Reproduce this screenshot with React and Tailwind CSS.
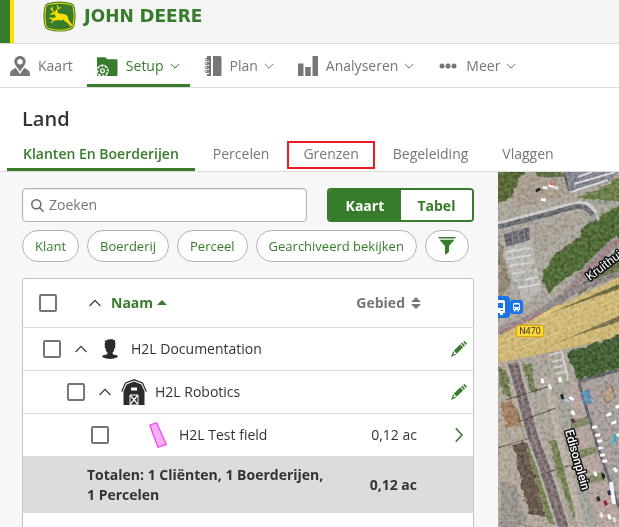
import { useState } from 'react';

const ChevronDown = () => (
  <svg className="w-2.5 h-2" viewBox="0 0 10 8" fill="none" stroke="currentColor" strokeWidth="1">
    <path d="M.8 2 5 6.2 9.2 2" />
  </svg>
);

const ChevronUp = () => (
  <svg className="w-3 h-2" viewBox="0 0 12 8" fill="none" stroke="currentColor" strokeWidth="1.1">
    <path d="M.6 7 6 1.4 11.4 7" />
  </svg>
);

const MapPersonIcon = () => (
  <svg className="size-5" viewBox="0 0 20 20" fill="currentColor">
    <path
      fillRule="evenodd"
      d="M10 0C6.600 0 4.300 2.500 4.300 5.500 4.300 9 8 12 10 15.500 12 12 15.700 9 15.700 5.500 15.700 2.500 13.400 0 10 0Zm0 3a2.700 2.700 0 1 1 0 5.400A2.700 2.700 0 0 1 10 3Z"
    />
    <path d="M5.500 11.800 1.800 14.200C.5 15 0 17 0 20H20C20 17 19.500 15 18.200 14.200L14.500 11.800C13 13.800 11.500 15.500 10 18.200 8.500 15.500 7 13.800 5.500 11.800Z" />
  </svg>
);

const FolderGearIcon = () => (
  <svg className="w-[21px] h-5" viewBox="0 0 21 20">
    <path d="M0 2Q0 1.300.8 1.300H8.200L10.500 3.200H19.500Q20.500 3.200 20.500 4.200V19Q20.500 20 19.500 20H0Z" fill="currentColor" />
    <circle cx="5.500" cy="14.800" r="6.200" fill="#fff" />
    <circle cx="5.500" cy="14.800" r="3.300" fill="none" stroke="currentColor" strokeWidth="1.500" />
    <circle cx="5.500" cy="14.800" r="4.600" fill="none" stroke="currentColor" strokeWidth="1.700" strokeDasharray="1.800 1.813" />
    <circle cx="5.500" cy="14.800" r="1.200" fill="currentColor" />
  </svg>
);

const NotebookIcon = () => (
  <svg className="w-[18px] h-5" viewBox="0 0 18 20" fill="currentColor">
    <path d="M9 0H16Q17.500 0 17.500 1.500V18.500Q17.500 20 16 20H9Z" />
    <path d="M3 0H7V20H3V18H5V16.500H3V14H5V12.500H3V10H5V8.500H3V6H5V4.500H3Z" />
    <path d="M4.500 2.500Q1 1.500 1 3.500T4.500 4.300M4.500 6.500Q1 5.500 1 7.500T4.500 8.300M4.500 10.500Q1 9.500 1 11.500T4.500 12.300M4.500 14.500Q1 13.500 1 15.500T4.500 16.300" fill="none" stroke="currentColor" />
  </svg>
);

const BarsIcon = () => (
  <svg className="size-5" viewBox="0 0 20 20" fill="currentColor">
    <path d="M0 7.500H5.500V20H0ZM7.200 11H12.700V20H7.200ZM14.500 0H20V20H14.500Z" />
  </svg>
);

const DotsIcon = () => (
  <svg className="w-5 h-5" viewBox="0 0 20 20" fill="currentColor">
    <circle cx="4" cy="10" r="2.500" />
    <circle cx="10" cy="10" r="2.500" />
    <circle cx="16" cy="10" r="2.500" />
  </svg>
);

const SearchIcon = () => (
  <svg className="size-[13px] shrink-0 text-[#666]" viewBox="0 0 13 13" fill="none" stroke="currentColor" strokeWidth="1.500">
    <circle cx="5.300" cy="5.300" r="4.500" />
    <path d="m8.500 8.500 4 4.200" />
  </svg>
);

const FunnelIcon = () => (
  <svg className="w-[18px] h-[18px]" viewBox="0 0 18 18" fill="currentColor">
    <path d="M.5 0H17.500V1.600H.5ZM1.500 2.800H16.500L11 9V15L7 18V9Z" />
  </svg>
);

const ClientIcon = () => (
  <svg className="w-4 h-5" viewBox="0 0 16 20" fill="#2b2b2b">
    <path d="M3.200 3.500 2.600 1.500 4.800 1.400 6 .3 8 .6 10.200 0 11.500 1.100 13.400 1.500 13 3.200 13.600 5 13 6.500 13.400 8.500 12.300 9.500 12 12 10.700 13.300V15.200L14.800 16.200Q16.200 17.200 15.800 18 12 20 8 20T.2 18Q-.2 17 1.200 16.200L5.300 15.200V13.300L4 12 3.700 9.500 2.600 8.500 3 6.500 2.500 5Z" />
  </svg>
);

const BarnIcon = () => (
  <svg className="w-[26px] h-[26px]" viewBox="0 0 26 26">
    <path d="M2.500 26V11L5.500 5.200 13 2 20.500 5.200 23.500 11V26Z" fill="#2b2b2b" />
    <path d="M.7 12.500 4.600 4 13 .8 21.400 4 25.300 12.500" fill="none" stroke="#2b2b2b" strokeWidth="1.300" />
    <path d="M2.200 12 5.500 5 13 2.100 20.500 5 23.800 12" fill="none" stroke="#fff" strokeWidth=".8" />
    <path d="M10 8.500H16V11.500H10Z" fill="#fff" />
    <path d="M9 16H17V26H9Z" fill="none" stroke="#fff" />
    <path d="m9.500 16.500 7 8.500M16.500 16.500l-7 8.500" stroke="#fff" strokeWidth="1.300" />
  </svg>
);

const FieldIcon = () => (
  <svg className="w-[18px] h-[26px]" viewBox="0 0 18 26">
    <path d="M.7 3.200 7.500.8 17.300 22.500 9 25.200Z" fill="#f9b0f9" stroke="#f33cf3" strokeWidth="1.200" />
  </svg>
);

const PencilIcon = () => (
  <svg className="size-4" viewBox="0 0 16 16" fill="currentColor">
    <path d="m12.200.8.9-.6q.5-.3 1 .2l1.600 1.800q.4.600-.1 1.100l-.8.8ZM11.300 1.600 14 4.800 12.800 6 10 2.600ZM9.300 3.200 12.100 6.600 5.500 12.800 3 9.500Z" />
    <path d="M2.300 10 0 16l5-2.500-.8-.8-2 .9.900-2.300Z" />
  </svg>
);

const ChevronRight = () => (
  <svg className="w-2 h-4 mx-1" viewBox="0 0 8 16" fill="none" stroke="currentColor" strokeWidth="1.600">
    <path d="m.8 1.200 6.200 6.800-6.200 6.800" />
  </svg>
);

const DeerLogo = () => (
  <svg className="w-[33px] h-[31px]" viewBox="0 0 33 31">
    <path d="M5 2Q16.500-1 28 2 31 3 31.600 6 33.500 15.500 31.600 24 31 27.500 28 28.700 16.500 32.500 5 28.700 2 27.500 1.400 24-.5 15.500 1.400 6 2 3 5 2Z" fill="#367c2b" />
    <path d="M5.700 3.300Q16.500.7 27.300 3.300 29.800 4 30.300 6.500 32 15.500 30.300 23.600 29.800 26.500 27.300 27.500 16.500 31 5.700 27.500 3.200 26.500 2.700 23.600 1 15.500 2.700 6.500 3.200 4 5.700 3.300Z" fill="none" stroke="#ffde00" />
    <path d="M7 13 10.500 11.300 14 9.800 15.500 12.500Q20 12.300 23.500 14L25 16 25.500 19 30 24.500 29 25 23.500 20.800 20.500 18.500 18 19.500 15.500 19 11 19.800 8.500 22.200 7.700 21.700 10 18.700 6.500 17.700 6.300 16.600 11 17 13 15.500 11.500 13.300 7.500 14Z" fill="#ffde00" />
    <path d="M11 11.300Q8.500 9.500 9.500 6M12.500 10.300Q16.500 8 14 4M15 7.500 18 6.500M9.200 8.800 7.500 7.500M21 19l4 2.500 3 4" fill="none" stroke="#ffde00" strokeWidth="1.100" />
  </svg>
);

const navItems = [
  { label: 'Kaart', icon: MapPersonIcon, menu: false },
  { label: 'Setup', icon: FolderGearIcon, menu: true, active: true },
  { label: 'Plan', icon: NotebookIcon, menu: true },
  { label: 'Analyseren', icon: BarsIcon, menu: true },
  { label: 'Meer', icon: DotsIcon, menu: true },
];

const tabs = ['Klanten En Boerderijen', 'Percelen', 'Grenzen', 'Begeleiding', 'Vlaggen'];

const chips = ['Klant', 'Boerderij', 'Perceel', 'Gearchiveerd bekijken'];

const rows = [
  { name: 'H2L Documentation', kind: 'client', indent: 'pl-5' },
  { name: 'H2L Robotics', kind: 'farm', indent: 'pl-11' },
  { name: 'H2L Test field', kind: 'field', indent: 'pl-17', area: '0,12 ac' },
];

// x, y, rotation, colour
const cars = [
  [45, 14, 10, '#eee'], [51, 12, 10, '#fff'], [56, 14, 10, '#ddd'], [43, 26, 5, '#fff'], [52, 10, 5, '#c66'],
  [37, 18, -30, '#223'], [45, 206, 70, '#fff'], [52, 212, 60, '#eee'], [65, 222, 75, '#222'], [72, 224, 30, '#fff'],
  [68, 226, 30, '#b5c6dc'], [75, 238, 60, '#fff'], [75, 246, 60, '#533'], [94, 254, -10, '#fff'], [97, 262, -10, '#fff'],
  [99, 268, -10, '#fff'], [100, 275, -10, '#eee'], [102, 282, -10, '#fff'], [104, 288, -10, '#fff'], [108, 242, -20, '#fff'],
  [113, 250, -20, '#fff'], [118, 262, -20, '#fff'], [117, 234, -20, '#fff'], [112, 318, 75, '#263755'], [101, 324, 70, '#222'],
  [108, 328, 70, '#922'], [112, 342, 70, '#fff'], [117, 345, 70, '#ddd'], [104, 340, 70, '#eee'], [106, 301, 70, '#222'],
  [98, 299, 70, '#fff'], [117, 295, 50, '#fff'], [63, 205, 80, '#fff'],
];

const SatelliteMap = () => (
  <svg className="absolute inset-0 w-full h-full" viewBox="0 0 121 355" preserveAspectRatio="xMinYMin slice">
    <defs>
      <filter id="grain" x="0" y="0" width="100%" height="100%" colorInterpolationFilters="sRGB">
        <feTurbulence type="fractalNoise" baseFrequency=".3" numOctaves="4" seed="8" />
        <feColorMatrix values="2.200 0 0 0 -.5  2.200 0 0 0 -.5  2.200 0 0 0 -.5  0 0 0 0 1" />
      </filter>
      <filter id="rough" x="-5%" y="-5%" width="110%" height="110%" colorInterpolationFilters="sRGB">
        <feTurbulence type="fractalNoise" baseFrequency=".15" numOctaves="2" seed="3" />
        <feDisplacementMap in="SourceGraphic" scale="7" xChannelSelector="R" yChannelSelector="G" />
      </filter>
    </defs>
    <rect width="121" height="355" fill="#aaa399" />
    <g filter="url(#rough)">
      <path d="M-4-4H30L22 8 14 24-4 34Z" fill="#566735" />
      <path d="M34-4H62L66 5 40 4Z" fill="#5f6f42" />
      <path d="M28 2 64 6 70 24 20 36 12 28Z" fill="#a89c8e" />
      <path d="M76 26 104 16 125 3V30L90 27Z" fill="#6a7c46" />
      <path d="M34 58 88 42 95 46 72 67 36 88Z" fill="#a8a094" />
      <path d="M0 70 6 74 12 110 2 130Z" fill="#8f8472" />
      <path d="M43 102 56 84 78 68 88 52 125 28V66L92 90 66 108 50 122Z" fill="#4e6834" />
      <path d="M78 116 124 76V98L82 122Z" fill="#626f45" />
    </g>
    <path d="M67 0H121L111 9 73 21Z" fill="#80828b" />
    <path d="M73 20 110 8M76 12 117 0M80 5 94 0" stroke="#d6d7dc" strokeWidth="2" />
    <path d="M71 19 66 0" stroke="#5d5e5d" strokeWidth="2" />
    <path d="M0 54Q48 41 76 34 94 29 98 49" fill="none" stroke="#cdcbca" strokeWidth="8" />
    <path d="M0 55Q48 43 76 35 92 32 97 50" fill="none" stroke="#6c6c73" strokeWidth="5" />
    <path d="M93 30 121 31" stroke="#989b95" strokeWidth="4" />
    <path d="M7 66 32 62 44 118 26 132 5 84Z" fill="#b8b5b1" />
    <path d="m8 80 24-4M9 87l24-4M11 94l25-4M14 102l24-4M17 109l23-4M20 116l22-4" stroke="#d3d1cf" strokeWidth="2" />
    <path d="M6 62 31 55 32 68 8 75Z" fill="#6b676f" />
    <path d="m14 60 1 13M20 58l1 13M26 57l1 12" stroke="#8e8b91" />
    <path d="M12 120Q50 80 66 66T121 31" fill="none" stroke="#a9aaa1" strokeWidth="5" opacity=".75" />
    <path d="M0 160Q55 142 78 112T121 67" fill="none" stroke="#958a8c" strokeWidth="9" />
    <path d="M0 161Q55 141 78 112T121 68" fill="none" stroke="#b07578" strokeWidth="1.500" />
    <path d="M45 138Q72 117 121 102" fill="none" stroke="#8c8685" strokeWidth="6" />
    <path d="M0 164 121 105V165L48 181 0 191Z" fill="#cdb674" />
    <path d="M0 176 121 126M0 184 121 137M8 168 121 119" stroke="#dac88c" />
    <path d="M48 143 121 112V117L80 131Z" fill="#6b6a3e" />
    <path d="M52 174 121 144V150L82 162Z" fill="#776f4a" />
    <path d="m39 145 20-12 6 1-21 13Z" fill="#dec47c" />
    <g filter="url(#rough)">
      <path d="M68 180 125 163V196L80 208Z" fill="#425e34" />
      <path d="M0 192 12 194 58 355H0Z" fill="#b0a699" />
      <path d="M3 231 15 228 25 252 8 258Z" fill="#a07c60" />
      <path d="M0 196 8 198 14 228 5 222Z" fill="#6c774e" />
      <path d="M15 272 28 270 36 302 47 344 31 342 23 312Z" fill="#66574b" />
      <path d="M20 238 26 240 60 355 48 346Z" fill="#778252" />
      <path d="M24 192 34 192 39 222 31 218Z" fill="#6f7e53" />
      <path d="M51 268 60 270 80 334 76 348 59 300Z" fill="#748152" />
      <path d="M3 310 18 314 30 355H2Z" fill="#98938c" />
    </g>
    <path d="m15 191 19 71 12 32 20 63" fill="none" stroke="#b3ada6" strokeWidth="15" />
    <path d="m15 191 19 71 12 32 20 63" fill="none" stroke="#78696b" strokeWidth="10" />
    <path d="m15 191 19 71 12 32 20 63" fill="none" stroke="#958786" strokeWidth="1" />
    <path d="M48 205 60 260 84 355" fill="none" stroke="#b8afa6" strokeWidth="7" />
    <path d="M57 213Q68 226 70 247L93 355" fill="none" stroke="#9fa098" strokeWidth="9" />
    <path d="m68 215 12-6 41 140v6H98Z" fill="#b3a29d" />
    <path d="m72 250 18-6 2 8-18 5ZM79 279l18-5 2 7-18 5ZM87 305l18-5 2 8-18 4Z" fill="#7c865f" />
    <path d="M80 211 121 198V336L103 281Z" fill="#a59d99" />
    <path d="m80 210 41-12M81 211l20 68 20 57" fill="none" stroke="#66656c" strokeWidth="3" />
    <path d="M83 220 91 217 94 230 87 233Z" fill="#5d8fb4" />
    <path d="m103 220 11-6 3 12-8 5ZM106 209l9 6" fill="#b59d86" stroke="#877161" />
    <path d="m113 310 3 22" stroke="#f3f4f5" strokeWidth="4" />
    <path d="m118 263-4 9" stroke="#4aabba" strokeWidth="4" />
    <path d="m8 228 44-14M20 250l38-14M42 303l31-10M0 276l32-10" stroke="#3c3b37" strokeWidth=".7" />
    <path d="M51 183 64 180 70 208M54 190l12-3M56 196l12-3M57 202l13-3" fill="none" stroke="#d0cec9" strokeWidth="2" />
    {cars.map(([x, y, turn, color]) => (
      <rect key={`${x}-${y}`} x={x} y={y} width="5" height="3" fill={color} transform={`rotate(${turn} ${x} ${y})`} />
    ))}
    <rect width="121" height="355" filter="url(#grain)" opacity=".35" className="mix-blend-soft-light" />
    <g>
      <path d="M-8 124H8Q12 124 12 128V142Q12 146 8 146H-8Z" fill="#1a73e8" />
      <path d="M-6 128H5Q7 128 7 130V141H5V143H2V141H-6Z" fill="#fff" />
      <path d="M-6 131H5V136H-6ZM3 138h2v1H3Z" fill="#1a73e8" />
      <rect x="12" y="128" width="13" height="14" rx="3" fill="#1a73e8" />
      <path d="M15 131.500Q18.500 130 22 131.500V138H21V139.500H19.500V138H17.500V139.500H16V138H15Z" fill="#fff" />
      <path d="M16 132.500H21V135H16ZM16 136h1v1H16ZM20 136h1v1H20Z" fill="#1a73e8" />
      <rect x="18.500" y="153.500" width="27" height="11" rx="1" fill="#fdd835" stroke="#e0a800" />
      <text x="32" y="162" textAnchor="middle" className="font-['Roboto'] text-[9px]" fill="#333">N470</text>
    </g>
    <g fill="#fff" stroke="#111" strokeWidth="3" strokeLinejoin="round" paintOrder="stroke">
      <text transform="translate(92 109) rotate(-37)" className="font-['Roboto'] text-xs">Kruithui</text>
      <text transform="translate(67 259) rotate(74)" className="font-['Roboto'] text-xs font-medium">Edisonplein</text>
    </g>
  </svg>
);

const Checkbox = ({ label }) => (
  <input
    type="checkbox"
    aria-label={label}
    className="appearance-none size-[18px] shrink-0 rounded-xs border-2 border-[#767676] bg-white checked:bg-[#367c2b]"
  />
);

const FarmTable = () => (
  <div className="flex-1 rounded-t-sm border border-b-0 border-[#c4c4c4] bg-white">
    <table className="w-full table-fixed text-left text-sm text-[#333]">
      <colgroup>
        <col />
        <col className="w-[91px]" />
        <col className="w-[52px]" />
      </colgroup>
      <thead>
        <tr className="h-12 border-b border-[#dcdcdc]">
          <th className="p-0 pl-4">
            <div className="flex items-center">
              <Checkbox label="Alles selecteren" />
              <button type="button" aria-label="Alles inklappen" className="ml-8">
                <ChevronUp />
              </button>
              <button type="button" className="ml-2.5 flex items-center gap-1 font-bold text-[#367c2b]">
                Naam
                <svg className="w-2.5 h-[5px]" viewBox="0 0 10 5" fill="currentColor">
                  <path d="M0 5 5 0 10 5Z" />
                </svg>
              </button>
            </div>
          </th>
          <th className="p-0">
            <button type="button" className="ml-auto flex items-center gap-1.5 font-bold text-[#767676]">
              Gebied
              <svg className="w-2.5 h-3" viewBox="0 0 10 12" fill="currentColor">
                <path d="M0 5 5 0 10 5ZM0 7H10L5 12Z" />
              </svg>
            </button>
          </th>
          <th className="p-0"></th>
        </tr>
      </thead>
      <tbody>
        {rows.map((row) => (
          <tr key={row.name} className="h-[43px] border-b border-[#dcdcdc] last:border-b-0">
            <td className={`p-0 ${row.indent}`}>
              <div className="flex items-center">
                <Checkbox label={row.name} />
                {row.kind !== 'field' ? (
                  <button type="button" aria-label={`${row.name} inklappen`} className="ml-3.5">
                    <ChevronUp />
                  </button>
                ) : (
                  <span className="ml-3.5 w-3" />
                )}
                <span className="mr-[7px] ml-[9px] flex w-7 justify-center">
                  {row.kind === 'client' && <ClientIcon />}
                  {row.kind === 'farm' && <BarnIcon />}
                  {row.kind === 'field' && <FieldIcon />}
                </span>
                {row.name}
              </div>
            </td>
            <td className="p-0 pr-1 text-right">{row.area}</td>
            <td className="p-0 pr-1.5 text-[#367c2b]">
              <div className="flex justify-end">
                {row.kind === 'field' ? (
                  <button type="button" aria-label={`${row.name} openen`}>
                    <ChevronRight />
                  </button>
                ) : (
                  <button type="button" aria-label={`${row.name} bewerken`}>
                    <PencilIcon />
                  </button>
                )}
              </div>
            </td>
          </tr>
        ))}
      </tbody>
      <tfoot>
        <tr className="h-[57px] bg-[#dcdcdc] font-bold">
          <td className="p-0 pl-16">Totalen: 1 Cliënten, 1 Boerderijen, 1 Percelen</td>
          <td className="p-0 pr-1 text-right">0,12 ac</td>
          <td className="p-0"></td>
        </tr>
      </tfoot>
    </table>
  </div>
);

const App = () => {
  const [search, setSearch] = useState('');
  const [view, setView] = useState('Kaart');

  return (
    <div className="flex min-h-screen flex-col bg-white font-['Open_Sans',sans-serif] text-sm text-[#333]">
      <header className="flex h-11 border-b border-[#dcdcdc] bg-[#f5f5f5]">
        <div className="w-3.5 border-r-4 border-[#ffde00] bg-[#367c2b]" />
        <a href="#" className="ml-[29px] flex h-8 items-center gap-2 text-[#367c2b]">
          <DeerLogo />
          <span className="font-['DejaVu_Sans',sans-serif] text-[17px] leading-5 font-bold">
            <span className="text-lg leading-5">J</span>OHN <span className="text-lg leading-5">D</span>EERE
          </span>
        </a>
      </header>

      <nav className="flex h-11 gap-1 border-b border-[#dcdcdc]">
        {navItems.map(({ label, icon: Icon, menu, active }) => (
          <a
            key={label}
            href="#"
            className={`flex items-center gap-2 border-b-3 px-2.5 pt-1 ${
              active ? 'border-[#367c2b] font-medium text-[#367c2b]' : 'border-transparent text-[#767676]'
            }`}
          >
            <Icon />
            <span className="flex items-center gap-1.5">
              {label}
              {menu && <ChevronDown />}
            </span>
          </a>
        ))}
      </nav>

      <h1 className="px-[22px] pt-[15px] pb-1.5 text-xl leading-8 font-semibold">Land</h1>
      <div className="flex items-start gap-0.5 border-b border-[#dcdcdc] pl-[7px]">
        {tabs.map((tab, i) => (
          <a
            key={tab}
            href="#"
            className={`px-4 pt-[3px] ${
              i === 0 ? 'border-b-3 border-[#367c2b] pb-1 font-semibold text-[#367c2b]' : 'pb-[5px] text-[#767676]'
            } ${tab === 'Grenzen' ? 'outline-2 -outline-offset-2 outline-[#ed1c24]' : ''}`}
          >
            {tab}
          </a>
        ))}
      </div>

      <main className="flex flex-1">
        <section className="flex w-[498px] shrink-0 flex-col bg-[#f7f7f7] pt-4 pr-6 pl-[22px]">
          <div className="flex gap-5">
            <label className="flex h-[34px] min-w-0 flex-1 items-center gap-[5px] rounded-sm border border-[#b3b3b3] bg-white px-2 shadow-[inset_0_1px_2px_#0000001a]">
              <SearchIcon />
              <input
                type="text"
                aria-label="Zoeken"
                placeholder="Zoeken"
                value={search}
                onChange={(e) => setSearch(e.target.value)}
                className="min-w-0 flex-1 outline-none placeholder:text-[#767676]"
              />
            </label>
            <div className="flex h-[34px] w-[147px] overflow-hidden rounded-sm border-2 border-[#367c2b] font-bold">
              {['Kaart', 'Tabel'].map((option) => (
                <button
                  key={option}
                  type="button"
                  onClick={() => setView(option)}
                  className={`grow pt-px ${view === option ? 'bg-[#367c2b] text-white' : 'bg-white text-[#367c2b]'}`}
                >
                  {option}
                </button>
              ))}
            </div>
          </div>

          <div className="mt-2 flex gap-2">
            {chips.map((chip) => (
              <button
                key={chip}
                type="button"
                className="h-8 rounded-full border border-[#b3b3b3] bg-white px-3 text-[13px] text-[#367c2b]"
              >
                {chip}
              </button>
            ))}
            <button
              type="button"
              aria-label="Filter"
              className="flex h-8 items-center rounded-full border border-[#b3b3b3] bg-white px-3 text-[#367c2b]"
            >
              <FunnelIcon />
            </button>
          </div>

          <div className="mt-4 flex flex-1 flex-col">
            <FarmTable />
          </div>
        </section>

        <section aria-label="Kaart" className="relative flex-1 overflow-hidden bg-[#a19990]">
          <SatelliteMap />
        </section>
      </main>
    </div>
  );
};

export default App;
